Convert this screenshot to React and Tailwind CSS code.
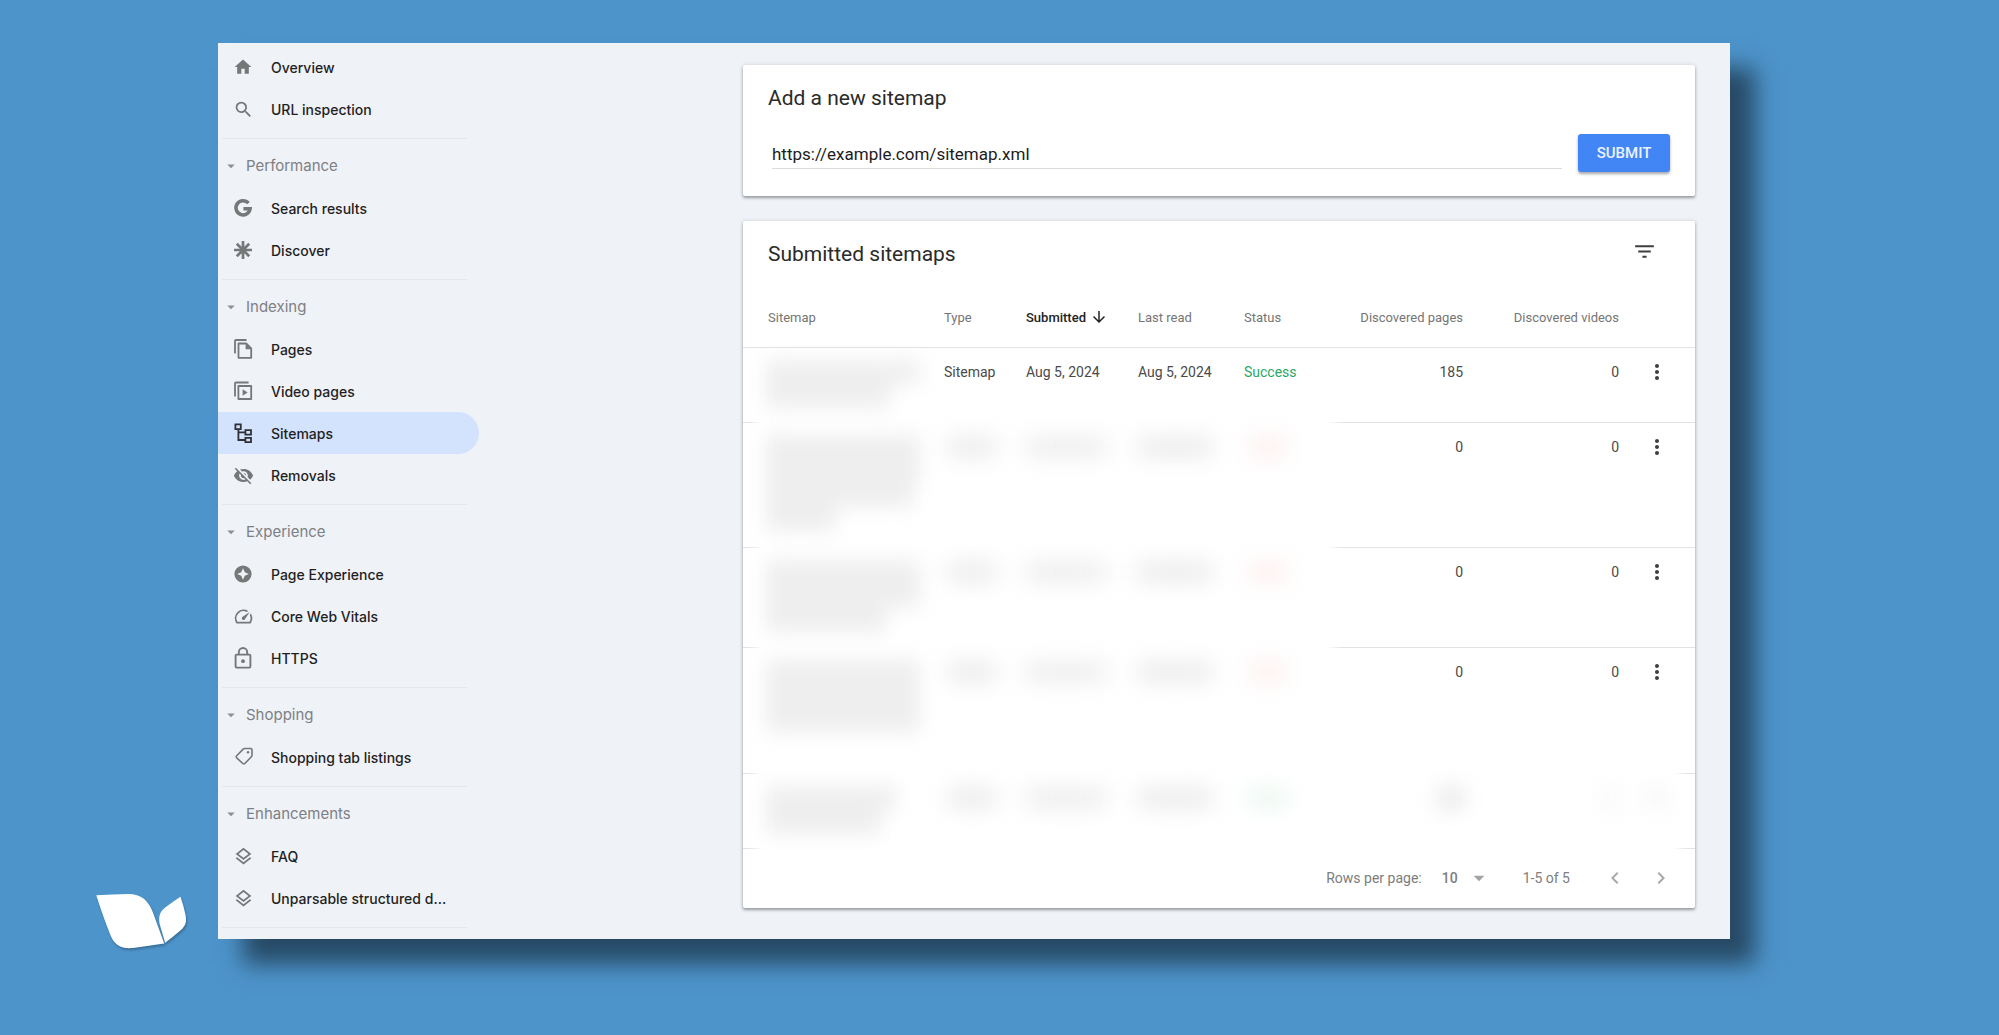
import React from "react";
import {
  MdHome,
  MdSearch,
  MdVisibilityOff,
  MdOutlineSpeed,
  MdOutlineLayers,
  MdArrowDropDown,
  MdMoreVert,
  MdFilterList,
  MdChevronLeft,
  MdChevronRight,
  MdArrowDownward,
} from "react-icons/md";

const svgProps = { viewBox: "0 0 24 24", width: 24, height: 24, fill: "none", "aria-hidden": true };

const HomeIcon = () => <MdHome size={20} />;
const SearchIcon = () => <MdSearch size={21} />;
const RemovalsIcon = () => <MdVisibilityOff size={21} />;
const SpeedIcon = () => <MdOutlineSpeed size={21} />;
const LayersIcon = () => <MdOutlineLayers size={21} />;

const GoogleIcon = () => (
  <svg {...svgProps}>
    <path
      d="M17.500 7.200A7.100 7.100 0 1 0 19.100 12.800H12.400"
      stroke="currentColor"
      strokeWidth="3.5"
    />
  </svg>
);

const DiscoverIcon = () => (
  <svg {...svgProps} stroke="currentColor" strokeWidth="2.7">
    <path d="M12 3v18M3 12h18M5.8 5.8l12.4 12.4M18.2 5.8L5.8 18.2" />
  </svg>
);

const PagesIcon = () => (
  <svg {...svgProps} stroke="currentColor" strokeWidth="1.8" strokeLinejoin="round">
    <path d="M4 16.500V4q0-1 1-1h10.500" />
    <path d="M7.500 6.500h7.700l5 5v9.300H7.500z" />
    <path d="M14.600 6.700v5.500h5.400z" fill="currentColor" stroke="none" />
  </svg>
);

const VideoPagesIcon = () => (
  <svg {...svgProps} stroke="currentColor" strokeWidth="1.8" strokeLinejoin="round">
    <path d="M4 17.500V4.500q0-1 1-1h12.600" />
    <path d="M7.400 7h12.800v13H7.400z" />
    <path d="M11.600 10.200v6.600l5-3.300z" fill="currentColor" stroke="none" />
  </svg>
);

const SitemapIcon = () => (
  <svg {...svgProps} stroke="currentColor" strokeWidth="1.8">
    <path d="M4.400 3.400h5.400v4.800H4.400zM14.400 9.200h5.600v4.400h-5.600zM14.400 16.800h5.600v4.400h-5.600z" />
    <path d="M7.400 8.200V19h7M7.400 11.400h7" />
  </svg>
);

const PageExperienceIcon = () => (
  <svg {...svgProps}>
    <path
      fill="currentColor"
      fillRule="evenodd"
      d="M12 3.400a8.600 8.600 0 1 0 0 17.200 8.600 8.600 0 0 0 0-17.200zM12 6.200l1.800 4 4 1.800-4 1.800-1.800 4-1.800-4-4-1.800 4-1.800z"
    />
  </svg>
);

const LockIcon = () => (
  <svg {...svgProps} stroke="currentColor" strokeWidth="1.9">
    <rect x="4.600" y="8.600" width="14.800" height="13" rx="1" />
    <path d="M7.800 8.500V6.200a4.200 4.200 0 0 1 8.400 0v2.300" />
    <circle cx="12" cy="15.200" r="1.900" fill="currentColor" stroke="none" />
  </svg>
);

const TagIcon = () => (
  <svg {...svgProps} stroke="currentColor" strokeWidth="1.6" strokeLinejoin="round">
    <path d="M13.600 3.500h6.200q1.200 0 1.200 1.200v5.600q0 .8-.6 1.400l-6.600 6.800q-1 1-2 0L5.700 12.800q-1-1 0-2l6.500-6.700q.6-.6 1.400-.6z" />
    <circle cx="17" cy="7.300" r="1.200" fill="currentColor" stroke="none" />
  </svg>
);

const topLinks = [
  { label: "Overview", Icon: HomeIcon },
  { label: "URL inspection", Icon: SearchIcon },
];

const sections = [
  {
    title: "Performance",
    links: [
      { label: "Search results", Icon: GoogleIcon },
      { label: "Discover", Icon: DiscoverIcon },
    ],
  },
  {
    title: "Indexing",
    links: [
      { label: "Pages", Icon: PagesIcon },
      { label: "Video pages", Icon: VideoPagesIcon },
      { label: "Sitemaps", Icon: SitemapIcon, active: true },
      { label: "Removals", Icon: RemovalsIcon },
    ],
  },
  {
    title: "Experience",
    links: [
      { label: "Page Experience", Icon: PageExperienceIcon },
      { label: "Core Web Vitals", Icon: SpeedIcon },
      { label: "HTTPS", Icon: LockIcon },
    ],
  },
  { title: "Shopping", links: [{ label: "Shopping tab listings", Icon: TagIcon }] },
  {
    title: "Enhancements",
    links: [
      { label: "FAQ", Icon: LayersIcon },
      { label: "Unparsable structured d...", Icon: LayersIcon },
    ],
  },
];

function NavLink({ label, Icon, active }) {
  return (
    <a
      href="#"
      aria-current={active ? "page" : undefined}
      className={
        active
          ? "flex h-[42px] items-center rounded-r-full bg-[#d3e2fd] pl-[13px] text-[#1f1f1f]"
          : "flex h-[42px] items-center pl-[13px] text-[#1f1f1f]"
      }
    >
      <span
        className={
          active
            ? "flex w-6 shrink-0 justify-center text-[#303134]"
            : "flex w-6 shrink-0 justify-center text-[#757779]"
        }
      >
        <Icon />
      </span>
      <span className="ml-4 whitespace-nowrap">{label}</span>
    </a>
  );
}

const Divider = () => <hr className="mr-3 ml-1 border-t border-[#e4e7ea]" />;

function Sidebar() {
  return (
    <nav className="w-[261px] shrink-0 pt-[3px] pb-[10px] font-['Inter',sans-serif] text-[14px] font-medium">
      <div className="pb-2">
        {topLinks.map((l) => (
          <NavLink key={l.label} {...l} />
        ))}
      </div>
      {sections.map((s) => (
        <section key={s.title}>
          <Divider />
          <div className="pt-[6px] pb-2">
            <button type="button" className="flex h-[42px] items-center pl-1 text-[15px] font-normal text-[#7d8084]">
              <MdArrowDropDown size={18} className="text-[#8d9093]" />
              <span className="ml-[6px]">{s.title}</span>
            </button>
            {s.links.map((l) => (
              <NavLink key={l.label} {...l} />
            ))}
          </div>
        </section>
      ))}
      <Divider />
    </nav>
  );
}

const cardClass =
  "rounded-[2px] bg-white shadow-[0_2px_3px_rgba(60,64,67,0.45),0_0_4px_rgba(60,64,67,0.16)]";

function AddSitemap() {
  return (
    <form className={`${cardClass} px-[25px] pt-[19px] pb-6`} onSubmit={(e) => e.preventDefault()}>
      <h2 className="text-[21px] leading-7 text-[#2a2a2a]">
        <label htmlFor="sitemap-url">Add a new sitemap</label>
      </h2>
      <div className="mt-[22px] flex items-end gap-4 pl-1">
        <input
          id="sitemap-url"
          type="text"
          defaultValue="https://example.com/sitemap.xml"
          className="mb-[3px] min-w-0 flex-1 border-b border-[#dcdcdc] pb-[2px] text-[17px] leading-6 text-[#1c1c1c] outline-none"
        />
        <button
          type="submit"
          className="h-[38px] w-[92px] rounded-[3px] bg-[#4285f4] text-[15px] font-medium text-white/90 shadow-[0_2px_3px_rgba(0,0,0,0.35)]"
        >
          SUBMIT
        </button>
      </div>
    </form>
  );
}

function Smudge({ className }) {
  return <div className={`relative z-20 blur-[11px] ${className}`} />;
}

function SmudgeLines({ widths }) {
  return (
    <div className="relative z-20 -ml-[2px] pt-3 blur-[10px]">
      {widths.map((w, i) => (
        <div key={i} className="h-6 bg-[#eeeeee]" style={{ width: w }} />
      ))}
    </div>
  );
}

const rows = [
  { height: "h-[75px]", lines: [154, 124], type: "Sitemap", submitted: "Aug 5, 2024", read: "Aug 5, 2024", status: "Success", pages: 185, videos: 0 },
  { height: "h-[125px]", lines: [154, 154, 148, 70], tone: "bg-[#fdf0ef]", pages: 0, videos: 0 },
  { height: "h-[100px]", lines: [154, 154, 120], tone: "bg-[#fdf0ef]", pages: 0, videos: 0 },
  { height: "h-[126px]", lines: [154, 154, 154], tone: "bg-[#fdf0ef]", pages: 0, videos: 0 },
  { height: "h-[75px]", lines: [130, 115], tone: "bg-[#ecf7f1]", hidden: true },
];

function Row({ row }) {
  const known = Boolean(row.type);
  return (
    <tr className={`${row.height} border-b border-[#e2e2e2] align-top text-[14px] leading-5 text-[#4a4a4a]`}>
      <td className="pl-[25px]">
        <SmudgeLines widths={row.lines} />
      </td>
      <td className="pt-[14px]">{known ? row.type : <Smudge className="ml-1 h-5 w-12 bg-[#ebebeb]" />}</td>
      <td className="pt-[14px]">{known ? row.submitted : <Smudge className="h-5 w-20 bg-[#ededed]" />}</td>
      <td className="pt-[14px]">{known ? row.read : <Smudge className="h-5 w-[74px] bg-[#ebebeb]" />}</td>
      <td className="pt-[14px] text-[#2aa866]">
        {known ? row.status : <Smudge className={`ml-1 h-5 w-10 ${row.tone}`} />}
      </td>
      <td className="pt-[14px] text-right">
        {row.hidden ? <Smudge className="ml-auto h-5 w-6 bg-[#e4e4e4]" /> : row.pages}
      </td>
      <td className="pt-[14px] text-right">
        {row.hidden ? <Smudge className="ml-auto h-5 w-4 bg-[#f6f6f6]" /> : row.videos}
      </td>
      <td className="pt-[12px]">
        {row.hidden ? (
          <Smudge className="mx-auto mt-[2px] h-5 w-5 bg-[#f5f5f5]" />
        ) : (
          <button type="button" aria-label="More options" className="mx-auto block text-[#3f3f3f]">
            <MdMoreVert size={24} />
          </button>
        )}
      </td>
    </tr>
  );
}

function SubmittedSitemaps() {
  return (
    <section className={`${cardClass} mt-[25px]`}>
      <div className="flex items-start justify-between pt-[18px] pr-[38px] pb-5 pl-[25px]">
        <h2 className="pt-[1px] text-[21px] leading-7 text-[#2a2a2a]">Submitted sitemaps</h2>
        <button type="button" aria-label="Filter" className="text-[#3f3f3f]">
          <MdFilterList size={25} />
        </button>
      </div>
      <div className="relative">
        <div className="absolute top-[110px] right-[360px] left-[12px] h-[270px] bg-white blur-[6px]" />
        <div className="absolute top-[470px] right-[14px] left-[12px] h-[104px] bg-white blur-[6px]" />
        <table className="w-full table-fixed border-collapse text-left">
          <colgroup>
            <col />
            <col className="w-[82px]" />
            <col className="w-[112px]" />
            <col className="w-[106px]" />
            <col className="w-[96px]" />
            <col className="w-[123px]" />
            <col className="w-[156px]" />
            <col className="w-[76px]" />
          </colgroup>
          <thead>
            <tr className="h-[59px] border-b border-[#e2e2e2] text-[13px] whitespace-nowrap text-[#757575] [&>th]:font-normal">
              <th className="pl-[25px]">Sitemap</th>
              <th>Type</th>
              <th className="text-[#222]" aria-sort="descending">
                <button type="button" className="flex items-center gap-1 font-medium">
                  Submitted
                  <MdArrowDownward size={18} />
                </button>
              </th>
              <th>Last read</th>
              <th>Status</th>
              <th className="text-right">Discovered pages</th>
              <th className="text-right">Discovered videos</th>
              <th aria-label="Actions" />
            </tr>
          </thead>
          <tbody>
            {rows.map((row, i) => (
              <Row key={i} row={row} />
            ))}
          </tbody>
        </table>
      </div>
      <div className="flex h-[59px] items-center justify-end pr-[22px] text-[14px] text-[#7d7d7d]">
        <label htmlFor="rows-per-page">Rows per page:</label>
        <div className="ml-5 flex items-center">
          <select id="rows-per-page" defaultValue="10" className="w-6 appearance-none font-medium outline-none">
            <option>10</option>
            <option>25</option>
            <option>50</option>
          </select>
          <MdArrowDropDown size={26} className="pointer-events-none text-[#a3a3a3]" />
        </div>
        <span className="ml-[31px]">1-5 of 5</span>
        <button type="button" aria-label="Previous page" className="ml-[33px] text-[#a8a8a8]">
          <MdChevronLeft size={24} />
        </button>
        <button type="button" aria-label="Next page" className="ml-[22px] text-[#a8a8a8]">
          <MdChevronRight size={24} />
        </button>
      </div>
    </section>
  );
}

function LeafLogo() {
  return (
    <svg viewBox="46 64 282 178" width="94" height="59" role="img" aria-label="Leaf logo" className="drop-shadow-[1px_2px_1px_rgba(0,0,0,0.25)]">
      <g fill="#fff">
        <path d="M49 74Q100 71 145 70C185 70 207 90 220 126L254 219Q205 226 160 233C125 236 103 224 91 192Q70 140 49 74Z" />
        <path d="M303 78Q313 106 318 132C323 155 318 168 301 182Q279 201 257 217L240 160C236 136 242 122 258 110Q280 93 303 78Z" />
      </g>
    </svg>
  );
}

export default function App() {
  return (
    <div className="flex min-h-screen items-start bg-[#4d94cb] pt-[43px] pr-[269px] pb-[84px] font-['Roboto',sans-serif]">
      <div className="flex w-[218px] shrink-0 justify-end self-stretch pr-[29px]">
        <div className="self-end">
          <LeafLogo />
        </div>
      </div>
      <div className="mb-3 flex min-w-0 flex-1 bg-[#eff2f7] shadow-[25px_25px_22px_rgba(0,0,0,0.5)]">
        <Sidebar />
        <main className="min-w-0 flex-1 pt-[22px] pr-[35px] pb-[31px] pl-[264px]">
          <AddSitemap />
          <SubmittedSitemaps />
        </main>
      </div>
    </div>
  );
}
